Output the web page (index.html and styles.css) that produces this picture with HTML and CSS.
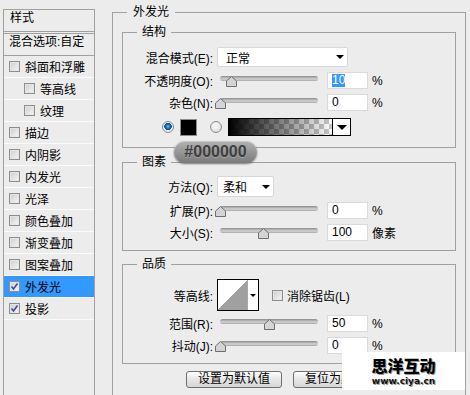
FILE: index.html
```html
<!DOCTYPE html>
<html lang="zh-CN">
<head>
    <meta charset="UTF-8" />
    <title>图层样式 - 外发光</title>
    <link rel="stylesheet" href="styles.css">
</head>
<body>

<div class="dialog">

    <!-- 左侧样式列表 -->
    <div class="style-list">
        <div class="list-head">样式</div>
        <div class="list-blend">混合选项:自定</div>
        <div class="list-item"><span class="check"></span>斜面和浮雕</div>
        <div class="list-item sub"><span class="check"></span>等高线</div>
        <div class="list-item sub"><span class="check"></span>纹理</div>
        <div class="list-item"><span class="check"></span>描边</div>
        <div class="list-item"><span class="check"></span>内阴影</div>
        <div class="list-item"><span class="check"></span>内发光</div>
        <div class="list-item"><span class="check"></span>光泽</div>
        <div class="list-item"><span class="check"></span>颜色叠加</div>
        <div class="list-item"><span class="check"></span>渐变叠加</div>
        <div class="list-item"><span class="check"></span>图案叠加</div>
        <div class="list-item active"><span class="check"><svg viewBox="0 0 9 9"><path d="M1.5 4.5 L3.5 7 L7.5 1.5"></path></svg></span>外发光</div>
        <div class="list-item"><span class="check"><svg viewBox="0 0 9 9"><path d="M1.5 4.5 L3.5 7 L7.5 1.5"></path></svg></span>投影</div>
    </div>

    <!-- 外发光 -->
    <fieldset class="group outer">
        <legend>外发光</legend>

        <fieldset class="group g-struct">
            <legend>结构</legend>
            <div class="row r-select">
                <span class="lbl">混合模式(E):</span>
                <div class="select wide">正常<span class="arrow"></span></div>
            </div>
            <div class="row">
                <span class="lbl">不透明度(O):</span>
                <div class="slider"><span class="track"></span><svg class="thumb" style="left: 11px" viewBox="0 0 11 11"><polygon points="0.5,10.5 0.5,5 5.5,0.5 10.5,5 10.5,10.5"></polygon></svg></div>
                <div class="num"><span class="sel">10</span></div>
                <span class="unit">%</span>
            </div>
            <div class="row">
                <span class="lbl">杂色(N):</span>
                <div class="slider"><span class="track"></span><svg class="thumb" style="left: 0px" viewBox="0 0 11 11"><polygon points="0.5,10.5 0.5,5 5.5,0.5 10.5,5 10.5,10.5"></polygon></svg></div>
                <div class="num">0</div>
                <span class="unit">%</span>
            </div>
            <div class="row r-color">
                <span class="radio on"></span>
                <span class="swatch"></span>
                <span class="radio second"></span>
                <div class="gradient">
                    <span class="grad-bar"></span>
                    <span class="grad-drop"><span class="arrow"></span></span>
                </div>
            </div>
        </fieldset>

        <fieldset class="group g-elem">
            <legend>图素</legend>
            <div class="row r-select2">
                <span class="lbl">方法(Q):</span>
                <div class="select narrow">柔和<span class="arrow"></span></div>
            </div>
            <div class="row">
                <span class="lbl">扩展(P):</span>
                <div class="slider"><span class="track"></span><svg class="thumb" style="left: 0px" viewBox="0 0 11 11"><polygon points="0.5,10.5 0.5,5 5.5,0.5 10.5,5 10.5,10.5"></polygon></svg></div>
                <div class="num">0</div>
                <span class="unit">%</span>
            </div>
            <div class="row">
                <span class="lbl">大小(S):</span>
                <div class="slider"><span class="track"></span><svg class="thumb" style="left: 43px" viewBox="0 0 11 11"><polygon points="0.5,10.5 0.5,5 5.5,0.5 10.5,5 10.5,10.5"></polygon></svg></div>
                <div class="num">100</div>
                <span class="unit">像素</span>
            </div>
        </fieldset>

        <fieldset class="group g-quality">
            <legend>品质</legend>
            <div class="row r-contour">
                <span class="lbl">等高线:</span>
                <div class="contour">
                    <span class="contour-pic"></span>
                    <span class="contour-drop"><span class="arrow small"></span></span>
                </div>
                <span class="check aa"></span>
                <span>消除锯齿(L)</span>
            </div>
            <div class="row r-after">
                <span class="lbl">范围(R):</span>
                <div class="slider"><span class="track"></span><svg class="thumb" style="left: 49px" viewBox="0 0 11 11"><polygon points="0.5,10.5 0.5,5 5.5,0.5 10.5,5 10.5,10.5"></polygon></svg></div>
                <div class="num">50</div>
                <span class="unit">%</span>
            </div>
            <div class="row">
                <span class="lbl">抖动(J):</span>
                <div class="slider"><span class="track"></span><svg class="thumb" style="left: 0px" viewBox="0 0 11 11"><polygon points="0.5,10.5 0.5,5 5.5,0.5 10.5,5 10.5,10.5"></polygon></svg></div>
                <div class="num">0</div>
                <span class="unit">%</span>
            </div>
        </fieldset>

        <div class="buttons">
            <button class="btn">设置为默认值</button>
            <button class="btn">复位为默认值</button>
        </div>
    </fieldset>

    <!-- 颜色提示 -->
    <div class="tip">#000000</div>

    <!-- 水印 -->
    <div class="watermark">
        <div class="wm-title">思洋互动</div>
        <div class="wm-url">www.ciya.cn</div>
    </div>
</div>

</body>
</html>
```

FILE: styles.css
```css
html, body {
    margin: 0;
    padding: 0;
    height: 100%;
    overflow: hidden;
}

body {
    background: #ececec;
    font-family: "Liberation Sans", "Noto Sans CJK SC", sans-serif;
    font-size: 12px;
    color: #000;
}

.dialog {
    position: relative;
    display: flex;
    align-items: flex-start;
    height: 395px;
}

/* Список стилей */
.style-list {
    flex: none;
    width: 92px;
    height: 400px;
    margin: 9px 0 0 3px;
    box-sizing: border-box;
    border: 1px solid #a0a0a0;
}

.list-head {
    height: 21px;
    line-height: 16px;
    padding-left: 6px;
    border-bottom: 3px double #a0a0a0;
}

.list-blend {
    height: 21px;
    line-height: 16px;
    padding-left: 5px;
    border-bottom: 1px solid #a0a0a0;
}

.list-item {
    height: 21px;
    display: flex;
    align-items: center;
    padding-left: 5px;
    border-bottom: 1px solid #fbfbfb;
}

.list-item.sub {
    padding-left: 20px;
}

.list-item.active {
    background: #3399ff;
}

.check {
    flex: none;
    display: inline-block;
    width: 11px;
    height: 11px;
    box-sizing: border-box;
    margin-right: 5px;
    border: 1px solid #8e8e8e;
    background: linear-gradient(135deg, #cdcdcd, #f7f7f7);
    box-shadow: inset 0 0 0 1px #e4e4e4;
}

.check svg {
    display: block;
    width: 9px;
    height: 9px;
    fill: none;
    stroke: #3d4c9c;
    stroke-width: 1.6;
}

/* Группы */
.group {
    margin: 0;
    padding: 7px 0 11px;
    border: 1px solid #a0a0a0;
    box-sizing: border-box;
    min-width: 0;
}

.group legend {
    margin-left: 14px;
    padding: 0 5px;
    line-height: 16px;
}

.outer {
    flex: none;
    width: 354px;
    margin: 4px 0 0 17px;
    padding: 4px 9px 20px;
}

.outer > legend {
    margin-left: 5px;
    padding: 0 6px;
}

.g-elem {
    margin-top: 6px;
    padding: 6px 0 9px;
}

.g-quality {
    margin-top: 5px;
    padding: 7px 0 9px;
}

/* Строки */
.row {
    display: flex;
    align-items: center;
    height: 17px;
    margin-top: 5px;
    white-space: nowrap;
}

legend + .row {
    margin-top: 0;
}

.r-select {
    height: 20px;
}

.r-select2 {
    height: 21px;
}

.r-color {
    height: 18px;
    margin-top: 7px;
    padding-left: 39px;
}

.r-contour {
    height: 32px;
}

.r-after {
    margin-top: 4px;
}

.lbl {
    flex: none;
    width: 90px;
    margin-right: 4px;
    text-align: right;
}

.select {
    flex: none;
    display: flex;
    align-items: center;
    justify-content: space-between;
    box-sizing: border-box;
    height: 20px;
    padding: 0 3px 0 8px;
    background: #fff;
    border: 1px solid #d8d8d8;
    border-radius: 2px;
}

.select.wide {
    width: 131px;
}

.select.narrow {
    width: 57px;
    height: 21px;
    padding-left: 5px;
}

.arrow {
    width: 0;
    height: 0;
    border-left: 4px solid transparent;
    border-right: 4px solid transparent;
    border-top: 4px solid #000;
}

.arrow.small {
    border-left-width: 3px;
    border-right-width: 3px;
    border-top-width: 3px;
}

/* Ползунки */
.slider {
    position: relative;
    flex: none;
    width: 108px;
    height: 17px;
    margin-left: -2px;
}

.track {
    display: block;
    width: 98px;
    height: 5px;
    margin: 4px 0 0 5px;
    border-radius: 3px;
    background: linear-gradient(#8a8a8a, #d4d4d4 60%, #a6a6a6);
}

.thumb {
    position: absolute;
    top: 4px;
    width: 11px;
    height: 11px;
}

.thumb polygon {
    fill: #d4d4d4;
    stroke: #6e6e6e;
    stroke-width: 1;
}

.num {
    flex: none;
    box-sizing: border-box;
    width: 41px;
    height: 17px;
    margin-left: 4px;
    padding-left: 4px;
    line-height: 15px;
    background: #fff;
    border: 1px solid #dadada;
}

.sel {
    display: inline-block;
    line-height: 13px;
    background: #3399ff;
    color: #fff;
}

.unit {
    margin-left: 4px;
}

/* Цвет и градиент */
.radio {
    flex: none;
    width: 12px;
    height: 12px;
    box-sizing: border-box;
    border-radius: 50%;
    border: 1px solid #8c8c8c;
    background: radial-gradient(circle at 45% 40%, #ffffff, #d2d2d2);
}

.radio.on {
    background: radial-gradient(circle at 50% 45%, #8fd6ff 0, #1c7cc8 1.5px, #0c4f8c 3.5px, #f2f2f2 4px, #d2d2d2 100%);
}

.radio.second {
    margin-left: 13px;
}

.swatch {
    flex: none;
    width: 17px;
    height: 17px;
    box-sizing: border-box;
    margin-left: 6px;
    border: 1px solid #8c8c8c;
    background: #000;
}

.gradient {
    flex: none;
    display: flex;
    width: 123px;
    height: 18px;
    box-sizing: border-box;
    margin-left: 6px;
    border: 1px solid #000;
}

.grad-bar {
    flex: 1;
    background:
        linear-gradient(to right, #000, rgba(0, 0, 0, 0)),
        repeating-conic-gradient(#c6c6c6 0 25%, #fff 0 50%) 0 0 / 10px 10px;
}

.grad-drop {
    flex: none;
    width: 17px;
    display: flex;
    align-items: center;
    justify-content: center;
    border-left: 1px solid #000;
    background: #fff;
}

.grad-drop .arrow {
    border-left-width: 5px;
    border-right-width: 5px;
    border-top-width: 5px;
}

/* Контур */
.contour {
    flex: none;
    display: flex;
    width: 42px;
    height: 32px;
    box-sizing: border-box;
    border: 1px solid #000;
    background: #fff;
}

.contour-pic {
    width: 29px;
    background: linear-gradient(to top left, #a0a0a0 50%, #fff 50%);
}

.contour-drop {
    flex: 1;
    display: flex;
    align-items: center;
    justify-content: center;
    border-left: 1px solid #a8a8a8;
}

.check.aa {
    margin: 0 4px 0 13px;
}

/* Кнопки */
.buttons {
    display: flex;
    gap: 11px;
    margin: 7px 0 0 64px;
}

.btn {
    width: 96px;
    height: 17px;
    box-sizing: border-box;
    padding: 0;
    border: 1px solid #6f6f6f;
    border-radius: 3px;
    background: linear-gradient(#fefefe, #e6e6e6 50%, #d6d6d6);
    font-family: inherit;
    font-size: 12px;
    line-height: 15px;
    color: #000;
}

/* Подсказка цвета */
.tip {
    position: absolute;
    left: 174px;
    top: 141px;
    width: 83px;
    height: 22px;
    border-radius: 11px;
    background: linear-gradient(#b2b2b2, #7a7a7a);
    box-shadow: 0 1px 2px rgba(0, 0, 0, 0.5), inset 0 1px 0 rgba(255, 255, 255, 0.35);
    font: bold 16px/22px "Liberation Sans", sans-serif;
    color: #3e3e3e;
    text-align: center;
    text-shadow: 0 1px 0 rgba(255, 255, 255, 0.25);
}

/* Водяной знак */
.watermark {
    position: absolute;
    left: 342px;
    top: 352px;
    width: 123px;
    height: 38px;
    background: #fff;
    text-align: center;
}

.wm-title {
    margin-top: 4px;
    font: 900 16px/19px "Noto Sans CJK SC", sans-serif;
    color: #000;
    text-shadow: 1px 1px 0 #9a9a9a;
}

.wm-url {
    margin-top: 1px;
    font: bold 9px/11px "DejaVu Sans", sans-serif;
    color: #111;
    text-shadow: 1px 1px 0 #9a9a9a;
}
```
